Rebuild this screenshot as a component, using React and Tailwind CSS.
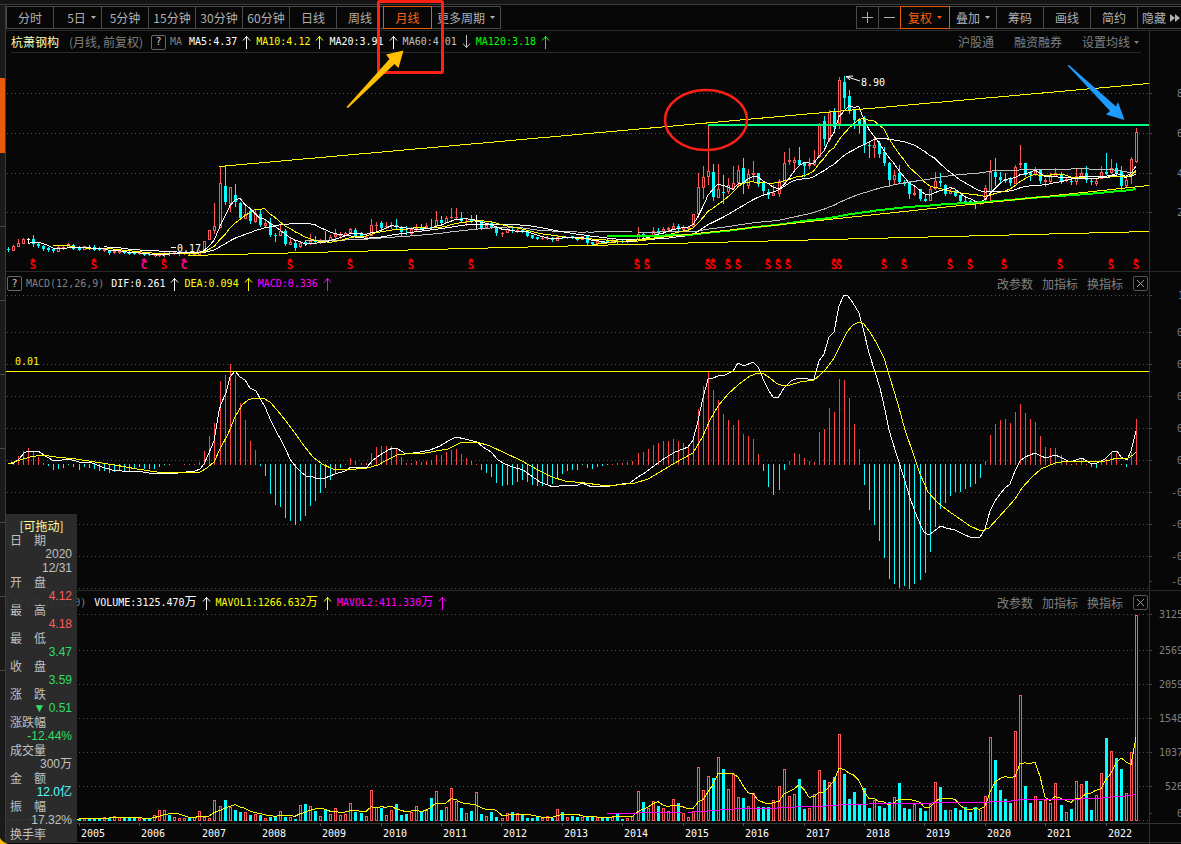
import React, { useState } from 'react';

const RED = '#ff5a5a';
const CYAN = '#00ffff';
const YELLOW = '#ffff00';
const MAGENTA = '#ff00ff';

// one monthly bar per entry: direction, high, top of body, bottom of body, low (chart units)
const CANDLES = `
c247,249,250,251 r245,246,251,251 r239,243,247,247 r238,239,244,244 w238,239,240,242 c235,239,244,246
c243,244,246,247 c245,246,249,250 c247,248,250,251 c248,249,251,252 r246,247,252,252 r246,247,249,249
r243,244,248,248 c244,245,249,249 c246,247,250,250 r246,246,250,250 c245,247,249,249 c245,247,250,250
c247,248,250,250 r248,249,251,251 c250,251,253,254 r250,251,253,253 r251,251,253,253 c251,252,253,253
c251,252,254,254 c251,252,254,254 r251,252,254,254 c252,254,255,255 c253,254,255,255 r253,254,255,255
r254,254,256,256 r252,253,255,255 c252,253,254,255 r252,252,254,254 r252,252,254,255 r252,252,254,254
c252,253,254,255 r252,253,255,255 r250,252,255,255 r241,241,251,251 r230,230,240,240 r203,226,231,234
r167,183,228,228 c166,186,202,204 r187,187,204,212 c184,195,202,206 c202,203,218,219 r205,214,219,219
c209,211,221,223 r210,213,222,223 c210,214,225,226 r219,223,226,228 c218,223,235,236 c233,235,236,241
r224,231,236,236 c229,231,244,245 r238,242,245,245 c241,243,248,250 r242,243,247,248 c241,242,244,245
r234,241,244,245 c236,240,242,243 r239,241,242,243 c231,240,242,242 r235,237,241,241 r229,234,237,239
r232,234,236,238 r232,233,236,236 r228,229,233,233 c228,230,236,236 c232,234,237,237 r235,237,238,238
r219,225,236,236 r222,225,226,230 c221,223,228,230 r222,226,227,228 r222,225,226,228 c219,225,227,228
c226,228,232,235 c226,229,230,234 r227,229,234,236 r224,228,230,230 c224,227,229,229 r223,226,228,228
c219,227,228,228 r211,220,226,226 c216,220,223,223 r216,218,223,223 r208,217,218,218 r208,217,218,219
c212,218,221,222 r219,221,222,225 c215,219,221,222 w215,221,222,229 c220,221,228,229 r224,225,228,228
c221,223,227,228 c226,227,233,235 r232,233,234,236 r228,229,233,233 c228,230,231,232 r228,230,232,232
c229,230,232,232 c230,231,236,236 c235,235,238,238 c237,237,239,239 r236,238,239,239 r236,238,239,239
c237,238,240,241 r236,237,241,241 c236,236,237,238 r237,237,238,238 c236,236,238,238 c238,238,240,240
r236,236,240,240 c236,236,243,244 c242,242,244,244 r241,241,244,244 c241,242,243,243 c239,241,242,242
r239,241,242,242 c240,241,242,243 c240,241,242,242 r240,241,242,242 r239,240,241,241 r227,234,240,240
c233,234,237,237 r235,236,238,238 r227,231,237,237 c228,231,233,233 r227,229,232,232 r227,228,230,230
r223,226,229,229 c224,226,228,230 r225,227,230,230 r226,227,229,229 r214,214,227,228 r173,187,214,218
r166,177,188,199 r125,171,177,185 c164,172,197,200 r164,189,198,198 c175,192,193,203 r178,185,192,194
r166,183,189,190 r165,170,183,186 c158,168,183,193 r169,174,186,189 r161,173,175,181 c173,173,184,186
c182,183,191,195 c189,192,195,198 r185,193,196,196 r179,181,194,197 r152,163,183,183 r148,160,162,164
r157,160,163,170 c147,160,165,165 c162,163,166,176 r158,164,166,168 r150,160,165,166 r123,125,157,158
c116,121,139,145 r110,112,140,142 c108,111,127,132 r77,80,124,129 c76,82,98,108 c90,96,111,113
c109,110,120,128 c118,120,125,133 c116,119,145,152 c142,145,146,157 r137,145,148,158 c141,143,154,157
c147,152,163,165 c162,163,180,186 r170,175,180,185 c165,173,182,182 c180,182,184,185 c182,182,194,198
r186,193,195,195 c189,189,199,200 c194,199,201,201 r186,189,201,201 r172,181,189,190 c173,181,183,186
c184,185,194,195 r189,191,194,194 c190,191,196,196 c195,195,201,203 c197,201,202,203 c200,201,203,203
c202,203,204,208 r201,201,204,205 r185,188,200,202 r160,172,192,201 c158,172,177,185 c172,177,180,182
c173,179,181,182 c177,179,183,185 r165,167,184,184 r145,163,165,167 c163,163,175,176 c171,172,175,180
r167,171,175,176 c169,170,181,183 r178,180,182,186 r173,175,182,183 r168,173,177,177 c172,175,181,183
r177,179,181,181 c180,181,182,184 r168,176,182,185 r168,173,177,177 c166,173,180,182 c178,181,182,184
r179,181,184,186 r166,172,179,179 c153,172,174,174 r159,168,173,174 c163,168,173,175 c166,171,186,190
r178,180,186,187 r157,159,176,184 r128,132,162,163`
  .trim()
  .split(/\s+/)
  .map((s) => {
    const [high, top, bottom, low] = s.slice(1).split(',').map(Number);
    return { dir: s[0], high, top, bottom, low };
  });

const HIST = [
  0, 2, 9, 14, 17, 13, 8, 2, -2, -6, -5, -4, -1, -3, -6, -3, -4, -5, -7, -7, -9, -8, -7, -7, -7, -4, -3, -5, -5, -5,
  -3, -1, -1, 0, 0, 1, 1, 1, 3, 14, 29, 42, 84, 90, 101, 90, 62, 45, 24, 15, -2, -12, -30, -41, -43, -54, -57, -61,
  -57, -52, -42, -37, -29, -24, -16, -9, -4, 1, 7, 4, 2, 2, 12, 18, 19, 19, 19, 17, 8, 2, 2, 4, 3, 4, 5, 10, 10, 13,
  15, 16, 11, 7, 4, 1, -6, -9, -13, -19, -22, -21, -21, -18, -16, -18, -21, -22, -22, -21, -20, -14, -10, -7, -6, -6,
  -1, -4, -5, -3, -2, -1, 1, 2, 2, 3, 4, 12, 13, 16, 20, 22, 24, 24, 26, 24, 22, 19, 29, 56, 79, 93, 75, 65, 51, 45,
  40, 45, 31, 29, 26, 11, -7, -23, -31, -26, -6, 4, 12, 11, 7, 4, 3, 33, 36, 57, 53, 86, 85, 67, 41, 16, -21, -46,
  -61, -77, -94, -115, -120, -124, -122, -125, -120, -116, -109, -88, -63, -45, -39, -32, -28, -28, -25, -23, -20,
  -14, 4, 30, 41, 45, 46, 42, 53, 61, 52, 46, 43, 29, 18, 17, 17, 10, 4, -1, 2, 6, 1, -3, -4, 4, 6, 12, 12, -1, -3,
  13, 46,
];

const VOLUME = [
  2, 2, 2, 2, 2, 2, 2, 2, 2, 2, 2, 2, 2, 2, 2, 3, 3, 3, 2, 4, 3, 5, 4, 3, 3, 3, 3, 2, 2, 6, 11, 11, 6, 4, 3, 3, 3, 4,
  10, 4, 3, 21, 15, 21, 14, 11, 9, 9, 6, 7, 6, 3, 4, 4, 10, 4, 4, 2, 16, 17, 15, 10, 5, 12, 7, 13, 6, 7, 18, 9, 8, 5,
  31, 14, 13, 6, 11, 17, 6, 7, 9, 15, 10, 12, 23, 30, 11, 14, 33, 20, 13, 8, 10, 29, 7, 5, 9, 4, 3, 8, 9, 8, 6, 3, 3,
  4, 3, 5, 3, 12, 9, 4, 5, 4, 4, 4, 4, 4, 4, 4, 4, 7, 2, 3, 5, 30, 19, 13, 20, 15, 13, 10, 22, 18, 8, 4, 10, 54, 31,
  45, 43, 64, 52, 32, 47, 24, 23, 15, 28, 14, 14, 14, 21, 35, 52, 25, 27, 42, 12, 13, 27, 51, 41, 39, 44, 87, 47, 22,
  29, 16, 33, 13, 21, 15, 13, 19, 24, 38, 13, 12, 17, 13, 10, 17, 39, 34, 11, 11, 13, 11, 14, 9, 14, 11, 25, 84, 61,
  31, 22, 18, 90, 126, 35, 18, 25, 20, 21, 18, 38, 16, 9, 12, 40, 37, 40, 11, 26, 48, 83, 70, 63, 52, 28, 69, 206,
];

const DIF =
  '8,464 14,463 19,459 24,453 28,451 38,451 44,455 52,460 62,460 69,459 79,462 90,462 102,467 112,470 122,471 143,472 155,474 178,473 195,471 200,469 204,464 209,453 214,441 219,411 221,404 226,393 230,377 235,371 240,377 245,380 250,388 256,391 261,400 265,407 271,421 276,431 281,440 286,450 290,459 295,466 301,472 306,476 313,477 315,478 325,478 330,476 335,474 345,471 351,467 367,467 373,460 380,455 388,450 393,448 398,449 401,451 406,454 420,452 430,450 440,446 450,440 456,437 465,439 477,442 483,447 491,452 498,460 505,464 513,467 523,470 530,475 540,482 548,485 553,487 566,485 578,485 582,483 592,487 610,486 622,484 630,483 638,477 646,472 655,465 665,458 675,452 683,449 688,447 693,440 698,421 702,402 708,379 713,378 718,376 725,375 733,371 738,363 744,366 753,362 758,367 764,381 769,391 773,397 778,398 784,388 791,381 798,378 808,379 814,379 819,361 824,354 829,337 834,332 839,306 844,295 848,296 853,303 859,313 864,332 869,353 875,372 880,388 885,410 889,430 896,453 904,478 910,498 917,517 924,532 929,535 933,532 941,526 946,528 955,530 963,534 972,538 980,537 985,529 990,511 995,501 1000,494 1005,488 1010,484 1015,471 1020,461 1025,457 1035,453 1041,456 1046,458 1055,455 1060,457 1070,462 1082,458 1090,463 1095,464 1105,459 1112,452 1117,451 1121,457 1127,460 1131,451 1136,431';
const DEA =
  '8,464 20,460 30,457 42,455 56,457 76,459 95,462 115,465 137,469 157,472 200,472 207,468 214,462 220,449 228,434 235,417 242,405 248,400 254,398 263,398 270,402 277,410 286,421 295,433 304,446 313,457 322,464 333,469 345,470 367,468 378,465 387,460 397,455 405,454 425,453 448,449 460,443 477,442 490,446 505,453 522,461 538,470 552,477 565,481 585,483 600,485 617,485 635,483 648,479 660,472 673,464 693,453 702,438 710,420 718,406 728,394 738,385 750,376 758,373 764,374 770,378 776,383 783,386 790,385 800,382 814,380 820,375 826,369 834,358 841,344 847,332 853,325 859,322 864,324 870,332 877,344 884,358 890,378 898,404 905,430 913,453 920,474 928,492 937,502 947,510 960,519 970,526 981,531 989,528 998,518 1007,508 1015,499 1022,488 1032,477 1041,469 1055,463 1068,461 1085,461 1100,462 1110,460 1117,458 1128,458 1133,455 1136,452';

const EVENTS = [33, 94, 164, 290, 350, 411, 471, 637, 647, 708, 713, 728, 738, 768, 778, 788, 834, 839, 884, 904, 950, 970, 1004, 1060, 1111, 1136];
const YEARS = [
  [2005, 79], [2006, 139], [2007, 200], [2008, 260], [2009, 320], [2010, 381], [2011, 441], [2012, 501], [2013, 562],
  [2014, 622], [2015, 683], [2016, 743], [2017, 804], [2018, 864], [2019, 924], [2020, 985], [2021, 1045], [2022, 1106],
];

const xAt = (i) => Math.round(8 + i * 5.036);

// moving average of a series as polyline points
const average = (values, n) => {
  const points = [];
  for (let i = n - 1; i < values.length; i++) {
    let sum = 0;
    for (let j = i - n + 1; j <= i; j++) sum += values[j];
    points.push(`${xAt(i)},${(sum / n).toFixed(1)}`);
  }
  return points.join(' ');
};

const CLOSES = CANDLES.map((c) => (c.dir === 'c' ? c.bottom : c.top));
const VOLUME_TOPS = VOLUME.map((v) => 821 - v);

const MONO = "font-['DejaVu_Sans_Mono','Noto_Sans_CJK_SC',monospace] text-[10px]";

const Line = ({ points, color, width = 1 }) => (
  <polyline points={points} fill="none" stroke={color} strokeWidth={width} />
);

const Grid = ({ rows }) =>
  rows.map((y) => (
    <line key={y} x1="7" x2="1149" y1={y + 0.5} y2={y + 0.5} stroke="#505050" strokeDasharray="1 3" shapeRendering="crispEdges" />
  ));

const Arrow = ({ color, down }) => (
  <svg width="9" height="14" viewBox="0 0 9 14" className={down ? 'rotate-180 shrink-0' : 'shrink-0'} aria-hidden="true">
    <path d="M4.5 1V14M1 5.5L4.5 1.5L8 5.5" fill="none" stroke={color} strokeWidth="1" />
  </svg>
);

const Caret = () => (
  <svg width="5" height="3" viewBox="0 0 5 3" aria-hidden="true">
    <path d="M0 0H5L2.5 3Z" fill="currentColor" />
  </svg>
);

const Reading = ({ text, unit, color, down }) => (
  <span className="flex items-center gap-[5px] mr-[5px] whitespace-nowrap" style={{ color }}>
    <span className={MONO}>
      {text}
      {unit && <span className="text-[12px]">{unit}</span>}
    </span>
    <Arrow color={color} down={down} />
  </span>
);

const Help = () => (
  <button aria-label="说明" className="w-[15px] h-[15px] shrink-0 border border-[#666] rounded-[2px] text-[#ccc] text-[10px] leading-[12px] text-center font-['DejaVu_Sans_Mono',monospace]">
    ?
  </button>
);

const PanelTools = () => (
  <div className="ml-auto flex items-center text-[#808080] pr-px">
    <button className="mr-[9px]">改参数</button>
    <button className="mr-[9px]">加指标</button>
    <button className="mr-[10px]">换指标</button>
    <button aria-label="关闭" className="w-[15px] h-[15px] border border-[#555] rounded-[2px] flex items-center justify-center">
      <svg width="9" height="9" viewBox="0 0 9 9" aria-hidden="true">
        <path d="M1 1L8 8M8 1L1 8" stroke="#999" strokeWidth="1" />
      </svg>
    </button>
  </div>
);

const Axis = ({ top, height, labels, children }) => (
  <div className="w-8 shrink-0 border-l border-[#333] overflow-hidden">
    <svg width="32" height={height} viewBox={`1150 ${top} 32 ${height}`} className={`block ${MONO}`}>
      {labels.map(([text, x, y]) => (
        <g key={y}>
          <rect x="1150" y={y} width="2" height="1" fill="#444" />
          <text x={x} y={y + 4} fill="#808080">{text}</text>
        </g>
      ))}
      {children}
    </svg>
  </div>
);

const PriceChart = () => (
  <svg viewBox="6 53 1143 218" className={`block w-full h-auto ${MONO}`}>
    <Grid rows={[93, 133, 173, 212]} />
    <g shapeRendering="crispEdges">
      {CANDLES.map((c, i) => {
        const x = xAt(i);
        const color = c.dir === 'r' ? RED : c.dir === 'c' ? CYAN : '#fff';
        const h = Math.max(1, c.bottom - c.top);
        if (c.dir === 'r' && h > 2) {
          return (
            <g key={i} fill={color}>
              <rect x={x} y={c.high} width="1" height={c.top - c.high} />
              <rect x={x} y={c.bottom} width="1" height={c.low - c.bottom} />
              <rect x={x - 0.5} y={c.top + 0.5} width="2" height={h - 1} fill="none" stroke={color} />
            </g>
          );
        }
        return (
          <g key={i} fill={color}>
            <rect x={x} y={c.high} width="1" height={c.low - c.high + 1} />
            <rect x={x - 1} y={c.top} width="3" height={h} />
          </g>
        );
      })}
      <Line points={average(CLOSES, 60)} color="#c0c0c0" />
      <Line points={average(CLOSES, 20)} color="#fff" />
      <Line points={average(CLOSES, 10)} color={YELLOW} />
      <Line points={average(CLOSES, 5)} color="#fff" />
      <Line points={average(CLOSES, 120)} color="#00ff00" width={2} />
      <Line points="219,166.5 225,166 1149,83.5" color={YELLOW} />
      <Line points="188,255.5 1149,231.5" color={YELLOW} />
      <Line points="593,244.5 1149,185.5" color={YELLOW} />
      <Line points="708,125 1149,125" color="#00ff7f" width={2} />
    </g>
    <path d="M860 81L846 76.5M846 76.5L853 76M846 76.5L850 80" stroke="#fff" fill="none" />
    <text x="861" y="86" fill="#fff">8.90</text>
    <path d="M171 247.5H176M155 256.5L158 254.5H162L165 256.5" stroke="#fff" fill="none" />
    <text x="177" y="252" fill="#fff">0.17</text>
    <g fontWeight="bold" textAnchor="middle" className="text-[11px]">
      {EVENTS.map((x) => (
        <g key={x} fill="#ff0000">
          <path d={`M${x - 3} 261L${x} 258L${x + 3} 261Z`} />
          <text x={x} y="269">S</text>
        </g>
      ))}
      {[144, 184].map((x) => (
        <g key={x} fill="#ff0090">
          <path d={`M${x - 3} 261L${x} 258L${x + 3} 261Z`} />
          <text x={x} y="269">C</text>
        </g>
      ))}
    </g>
  </svg>
);

const MacdChart = () => (
  <svg viewBox="6 294 1143 296" className={`block w-full h-auto ${MONO}`}>
    <Grid rows={[295, 332, 364, 396, 428, 460, 492, 524, 556, 588]} />
    <g shapeRendering="crispEdges">
      {HIST.map((h, i) => (
        <rect key={i} x={xAt(i)} y={h > 0 ? 465 - h : 464} width="1" height={Math.abs(h)} fill={h > 0 ? '#ff4040' : CYAN} />
      ))}
      <Line points={DIF} color="#fff" />
      <Line points={DEA} color={YELLOW} />
      <rect x="6" y="371" width="1143" height="1" fill={YELLOW} />
    </g>
    <text x="15" y="365" fill={YELLOW}>0.01</text>
  </svg>
);

const VolumeChart = () => (
  <svg viewBox="6 613 1143 231" className={`block w-full h-auto ${MONO}`}>
    <Grid rows={[614, 650, 684, 718, 752, 786, 820]} />
    <g shapeRendering="crispEdges">
      {VOLUME.map((v, i) => {
        const x = xAt(i);
        return CANDLES[i].dir === 'c' ? (
          <rect key={i} x={x - 1} y={821 - v} width="3" height={v} fill={CYAN} />
        ) : (
          <rect key={i} x={x - 0.5} y={821.5 - v} width="2" height={Math.max(1, v - 1)} fill="none" stroke={RED} />
        );
      })}
      <Line points={average(VOLUME_TOPS, 5)} color={YELLOW} />
      <Line points={average(VOLUME_TOPS, 120)} color={MAGENTA} />
      <rect x="6" y="823" width="1143" height="1" fill="#333" />
      <rect x="6" y="842" width="1143" height="1" fill="#333" />
    </g>
    {YEARS.map(([year, x]) => (
      <g key={year}>
        <rect x={x} y="823" width="1" height="3" fill="#555" />
        <text x={x + 2} y="837" fill="#fff">{year}</text>
      </g>
    ))}
  </svg>
);

const QUOTE = [
  ['日　期', ['2020', '12/31'], 'text-[#c0c0c0]'],
  ['开　盘', ['4.12'], 'text-[#ff5a5a]'],
  ['最　高', ['4.18'], 'text-[#ff5a5a]'],
  ['最　低', ['3.47'], 'text-[#33dd66]'],
  ['收　盘', ['3.59'], 'text-[#33dd66]'],
  ['涨　跌', ['▼ 0.51'], 'text-[#33dd66]'],
  ['涨跌幅', ['-12.44%'], 'text-[#33dd66]'],
  ['成交量', ['300万'], 'text-[#c0c0c0]'],
  ['金　额', ['12.0亿'], 'text-[#55ffff]'],
  ['振　幅', ['17.32%'], 'text-[#c0c0c0]'],
  ['换手率', [], 'text-[#c0c0c0]'],
];

const QuoteBox = () => (
  <aside className="absolute left-[6px] bottom-px w-[71px] h-[329px] pt-[5px] overflow-hidden bg-[#2d2d2d]/95 leading-[14px]">
    <h2 className="text-center text-[#ffffa0]">[可拖动]</h2>
    <dl className="pl-[4px] pr-[5px]">
      {QUOTE.map(([label, values, color]) => (
        <React.Fragment key={label}>
          <dt className="text-[#c0c0c0] whitespace-nowrap">{label}</dt>
          {values.map((v) => (
            <dd key={v} className={`text-right whitespace-nowrap font-['Liberation_Sans','Noto_Sans_CJK_SC',sans-serif] ${color}`}>
              {v}
            </dd>
          ))}
        </React.Fragment>
      ))}
    </dl>
  </aside>
);

const PERIODS = ['分时', '5日', '5分钟', '15分钟', '30分钟', '60分钟', '日线', '周线', '月线'];

const toolButton = 'h-[23px] -ml-px first:ml-0 border flex items-center justify-center gap-[5px] whitespace-nowrap shrink-0';
const idle = 'border-[#4a4a4a] text-[#b0b0b0]';
const active = 'border-[#e85a0c] text-[#ff6010] relative z-10';

const Toolbar = () => {
  const [period, setPeriod] = useState('月线');

  return (
    <nav className="flex justify-between pt-px pb-px border-b border-[#2a2a2a] overflow-hidden">
      <div className="flex">
        {PERIODS.map((p) => (
          <button
            key={p}
            onClick={() => setPeriod(p)}
            className={`${toolButton} ${p === '5日' || p === '月线' ? 'w-[49px]' : 'w-[48px]'} ${p === '5日' ? 'pl-2' : ''} ${p === period ? active : idle}`}
          >
            {p}
            {p === '5日' && <Caret />}
          </button>
        ))}
        <button className={`${toolButton} ${idle} w-[70px]`}>更多周期<Caret /></button>
      </div>
      <div className="flex">
        <button aria-label="放大" className={`${toolButton} ${idle} w-[23px]`}>
          <svg width="11" height="11" viewBox="0 0 11 11"><path d="M0 5.5H11M5.5 0V11" stroke="currentColor" /></svg>
        </button>
        <button aria-label="缩小" className={`${toolButton} ${idle} w-[23px]`}>
          <svg width="11" height="11" viewBox="0 0 11 11"><path d="M0 5.5H11" stroke="currentColor" /></svg>
        </button>
        <button className={`${toolButton} ${active} w-[50px]`}>复权<Caret /></button>
        <button className={`${toolButton} ${idle} w-[48px]`}>叠加<Caret /></button>
        <button className={`${toolButton} ${idle} w-[48px]`}>筹码</button>
        <button className={`${toolButton} ${idle} w-[48px]`}>画线</button>
        <button className={`${toolButton} ${idle} w-[48px]`}>简约</button>
        <button className={`${toolButton} ${idle} w-[44px] border-r-0 pl-[3px]`}>
          隐藏
          <svg width="10" height="8" viewBox="0 0 10 8" className="-ml-px"><path d="M0 0L5 4L0 8ZM5 0L10 4L5 8Z" fill="currentColor" /></svg>
        </button>
      </div>
    </nav>
  );
};

// hand-drawn marks over the charts
const Marks = () => (
  <svg viewBox="0 0 1181 844" className="absolute left-0 top-0 w-full h-auto pointer-events-none z-20" aria-hidden="true">
    <rect x="378.5" y="1.5" width="64" height="71" rx="1" fill="none" stroke="#ff2014" strokeWidth="3" />
    <ellipse cx="706" cy="120" rx="41" ry="30" fill="none" stroke="#ff2014" strokeWidth="2.5" />
    <path d="M346.5 107L389.5 59L386 54.5L403.5 50.5L398.5 68L394.5 64L348 108Z" fill="#ffc000" />
    <path d="M1067.5 65.5L1069 65L1116 106.5L1118 102L1124.5 120L1106 114.5L1110 111Z" fill="#1e9bff" />
    <path d="M0 838Q2 842 8 844H0Z" fill="#ffc000" />
  </svg>
);

export default function App() {
  return (
    <div className="relative min-h-screen overflow-hidden bg-[#070707] text-[12px] leading-[16px] font-['Noto_Sans_CJK_SC',sans-serif]">
      <div className="h-[5px] bg-[#161616] border-b border-[#3a3a3a]" />
      <div className="flex">
        <div className="w-[6px] shrink-0 bg-[#1a1a1a] border-r border-[#3a3a3a]">
          <div className="h-[73px]" />
          <div className="h-[75px] bg-[#e85a0c]" />
          {[1, 2, 3, 4, 5, 6, 7].map((n) => (
            <div key={n} className="h-[74px] border-b border-[#4a4a4a]" />
          ))}
        </div>

        <main className="flex-1 min-w-0">
          <Toolbar />

          <section className="flex border-b border-[#2a2a2a]">
            <div className="flex-1 min-w-0">
              <header className="h-[22px] ml-[5px] mr-[8px] pt-px flex items-center border-b border-[#2a2a2a]">
                <h1 className="text-[#ffffb0] whitespace-nowrap">杭萧钢构</h1>
                <span className="text-[#808080] ml-[10px] w-[82px] whitespace-nowrap">(月线, 前复权)</span>
                <Help />
                <span className={`${MONO} text-[#808080] ml-[4px] mr-[7px]`}>MA</span>
                <Reading text="MA5:4.37" color="#ffffff" />
                <Reading text="MA10:4.12" color={YELLOW} />
                <Reading text="MA20:3.91" color="#ffffff" />
                <Reading text="MA60:4.01" color="#c0c0c0" down />
                <Reading text="MA120:3.18" color="#00ff00" />
                <div className="ml-auto pr-[2px] flex items-center gap-[20px] text-[#808080]">
                  <a href="#hgt">沪股通</a>
                  <a href="#rzrq">融资融券</a>
                  <button className="flex items-center gap-[4px]">设置均线<Caret /></button>
                </div>
              </header>
              <PriceChart />
            </div>
            <Axis top={31} height={240} labels={[['8', 1177, 93], ['6', 1177, 133], ['4', 1177, 173], ['2', 1177, 212]]} />
          </section>

          <section className="flex border-b border-[#2a2a2a]">
            <div className="flex-1 min-w-0">
              <header className="h-[22px] pl-px pt-px flex items-center">
                <Help />
                <span className={`${MONO} text-[#808080] ml-[4px] mr-[7px]`}>MACD(12,26,9)</span>
                <Reading text="DIF:0.261" color="#ffffff" />
                <Reading text="DEA:0.094" color={YELLOW} />
                <Reading text="MACD:0.336" color={MAGENTA} />
                <PanelTools />
              </header>
              <MacdChart />
            </div>
            <Axis
              top={272}
              height={318}
              labels={[
                ['1', 1178, 295], ['0', 1177, 332], ['0', 1177, 364], ['0', 1177, 396], ['0', 1177, 428], ['0', 1177, 460],
                ['-0', 1171, 492], ['-0', 1171, 524], ['-0', 1171, 556], ['-0', 1171, 581],
              ]}
            />
          </section>

          <section className="flex">
            <div className="flex-1 min-w-0">
              <header className="h-[22px] pl-px pt-px flex items-center">
                <Help />
                <span className={`${MONO} text-[#808080] ml-[4px] mr-[8px]`}>VOL(5,120)</span>
                <Reading text="VOLUME:3125.470" unit="万" color="#ffffff" />
                <Reading text="MAVOL1:1266.632" unit="万" color={YELLOW} />
                <Reading text="MAVOL2:411.330" unit="万" color={MAGENTA} />
                <PanelTools />
              </header>
              <VolumeChart />
            </div>
            <Axis
              top={591}
              height={253}
              labels={[
                ['3125', 1159, 614], ['2569', 1159, 650], ['2059', 1159, 684], ['1548', 1159, 718], ['1037', 1159, 752],
                ['526', 1165, 786], ['0', 1177, 813],
              ]}
            >
              <rect x="1150" y="823" width="32" height="1" fill="#333" />
              <rect x="1150" y="842" width="32" height="1" fill="#333" />
            </Axis>
          </section>
        </main>
      </div>
      <QuoteBox />
      <Marks />
    </div>
  );
}
